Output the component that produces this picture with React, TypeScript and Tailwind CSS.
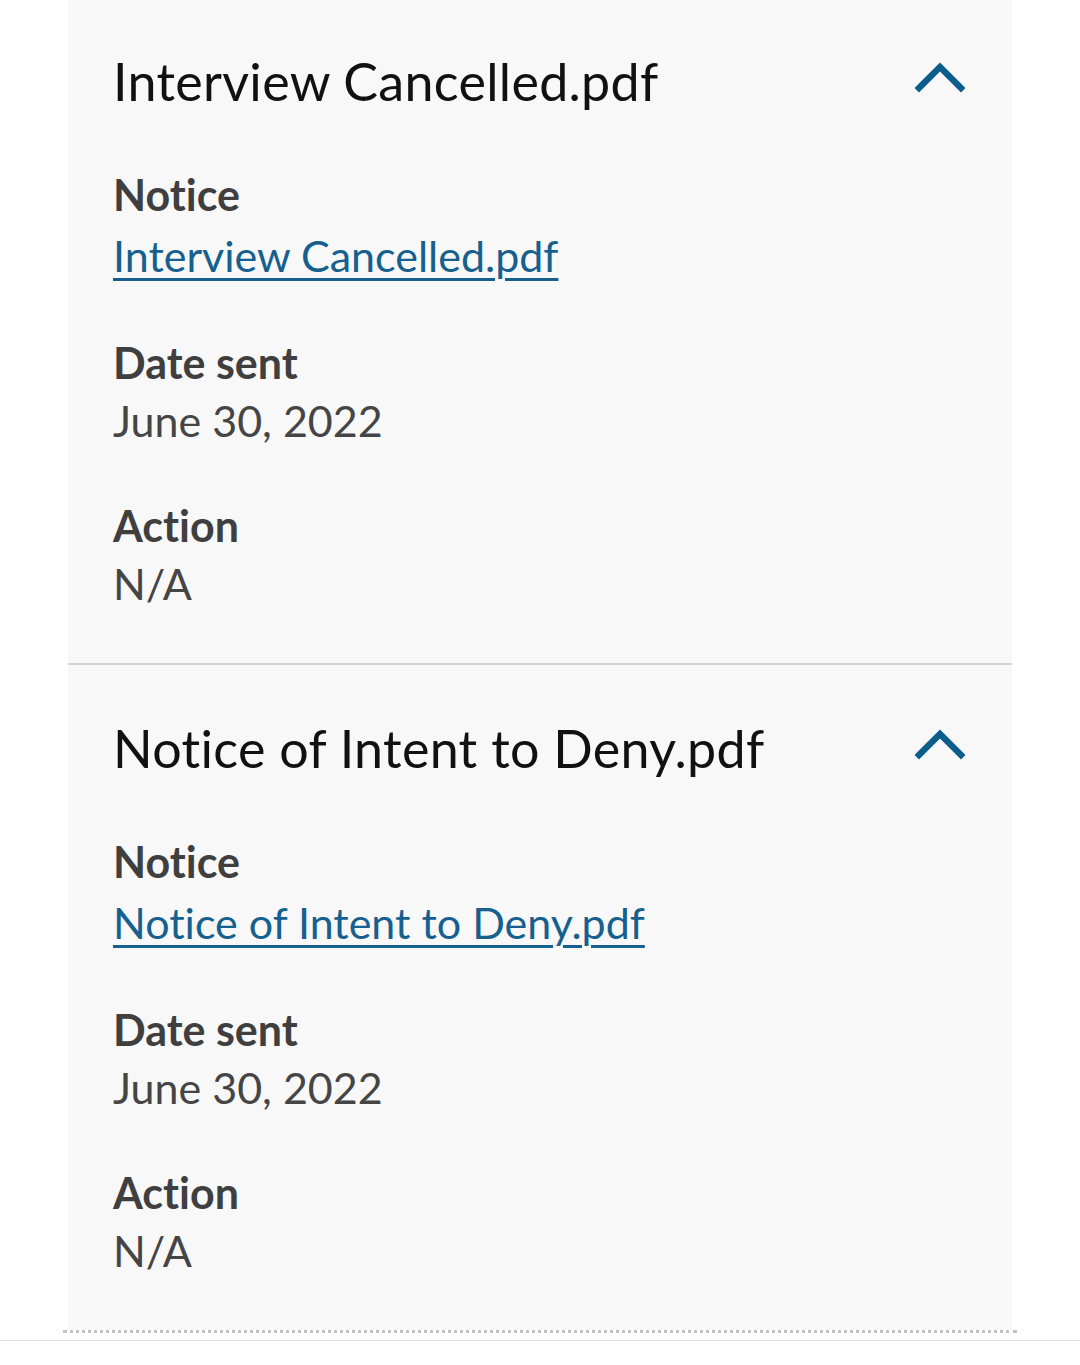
import React from "react";

interface NoticeItem {
  id: number;
  file: string;
  dateSent: string;
  action: string;
}

const notices: NoticeItem[] = [
  { id: 1, file: "Interview Cancelled.pdf", dateSent: "June 30, 2022", action: "N/A" },
  { id: 2, file: "Notice of Intent to Deny.pdf", dateSent: "June 30, 2022", action: "N/A" },
];

const ChevronUp = () => (
  <svg width="50" height="32" viewBox="0 0 50 32" fill="none" className="shrink-0 mt-[12px]">
    <polyline
      points="4,27 25,6 46,27"
      stroke="#0b5d8c"
      strokeWidth="6.5"
      strokeLinecap="square"
      strokeLinejoin="miter"
    />
  </svg>
);

const NoticeSection: React.FC<{ item: NoticeItem; last?: boolean }> = ({ item, last }) => (
  <section
    className={`pl-[45px] pr-[47px] pt-[51px] pb-[50px] ${
      last ? "" : "border-b-2 border-[#d3d3d3]"
    }`}
  >
    {/* Header */}
    <div className="flex items-start justify-between">
      <h2 className="text-[52px] leading-[65px] text-[#111111] font-normal tracking-[0.3px]">
        {item.file}
      </h2>
      <ChevronUp />
    </div>

    {/* Details */}
    <dl className="mt-[52px] text-[43px] leading-[58px] text-[#454545]">
      <div>
        <dt className="font-bold text-[#3f3f3f]">Notice</dt>
        <dd className="mt-[3px]">
          <a
            href="#"
            className="text-[#16608f] underline decoration-[3px] underline-offset-[6px]"
          >
            {item.file}
          </a>
        </dd>
      </div>
      <div className="mt-[49px]">
        <dt className="font-bold text-[#3f3f3f]">Date sent</dt>
        <dd>{item.dateSent}</dd>
      </div>
      <div className="mt-[47px]">
        <dt className="font-bold text-[#3f3f3f]">Action</dt>
        <dd>{item.action}</dd>
      </div>
    </dl>
  </section>
);

export default function App() {
  return (
    <div
      className="min-h-[1365px] bg-white overflow-hidden [font-variant-ligatures:none]"
      style={{ fontFamily: "Lato, 'Noto Sans', sans-serif" }}
    >
      <div className="-mt-[2px] mx-[68px] bg-[#f8f8f8]">
        {notices.map((n, i) => (
          <NoticeSection key={n.id} item={n} last={i === notices.length - 1} />
        ))}
      </div>
      {/* bottom edge */}
      <div className="mx-[63px] border-b-[3px] border-dotted border-[#c2c2c2]" />
      <div className="mt-[7px] h-px bg-[#e2e2e2]" />
    </div>
  );
}
